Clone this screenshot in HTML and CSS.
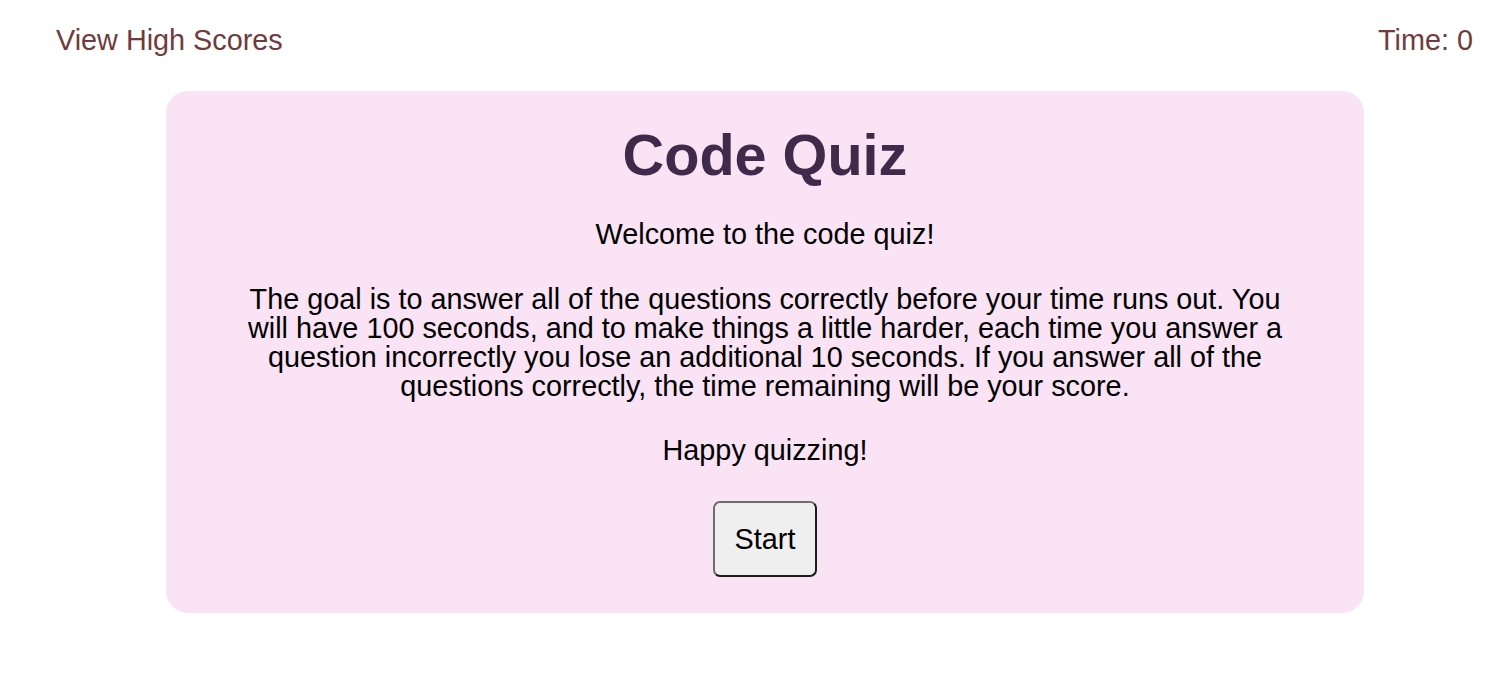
FILE: index.html
```html
<!DOCTYPE html>
<html lang="en">
<head>
<meta charset="utf-8">
<title>Code Quiz</title>
<link rel="stylesheet" href="styles.css">
</head>
<body>
<header class="topbar">
  <a class="scores-link" href="#">View High Scores</a>
  <div class="timer">Time: 0</div>
</header>
<main class="card">
  <h1 class="title">Code Quiz</h1>
  <p class="intro">Welcome to the code quiz!</p>
  <p class="intro rules">The goal is to answer all of the questions correctly before your time runs out. You will have 100 seconds, and to make things a little harder, each time you answer a question incorrectly you lose an additional 10 seconds. If you answer all of the questions correctly, the time remaining will be your score.</p>
  <p class="intro closing">Happy quizzing!</p>
  <button class="start-btn" type="button">Start</button>
</main>
</body>
</html>
```
FILE: styles.css
```css
html, body {
  margin: 0;
  padding: 0;
  background: #ffffff;
}
body {
  font-family: "Liberation Sans", Arial, sans-serif;
  font-size: 28.8px;
  color: #000;
}
.topbar {
  display: flex;
  justify-content: space-between;
  align-items: baseline;
  padding: 24px 17px 0 56px;
  line-height: 33px;
  color: #6f3b3c;
}
.scores-link {
  color: #6f3b3c;
  text-decoration: none;
}
.timer {
  color: #6f3b3c;
}
.card {
  box-sizing: border-box;
  width: 1198px;
  margin: 34px 0 0 166px;
  padding: 31px 80px 36px;
  background: #f9e3f4;
  border-radius: 22px;
  display: flex;
  flex-direction: column;
  align-items: center;
  text-align: center;
}
.title {
  margin: 0;
  font-size: 57.6px;
  line-height: 66px;
  font-weight: bold;
  color: #3f2a4b;
}
.intro {
  margin: 0;
  line-height: 28.8px;
}
.title + .intro {
  margin-top: 31.5px;
}
.intro + .intro {
  margin-top: 37px;
}
.intro + .closing {
  margin-top: 36px;
}
.start-btn {
  margin-top: 36px;
  box-sizing: border-box;
  width: 104px;
  height: 76px;
  padding: 0;
  font-family: "Liberation Sans", Arial, sans-serif;
  font-size: 28.8px;
  color: #000;
  background: #efefef;
  border: 2px solid;
  border-color: #6e6e6e #1c1c1c #1c1c1c #6e6e6e;
  border-radius: 7px;
}
```
